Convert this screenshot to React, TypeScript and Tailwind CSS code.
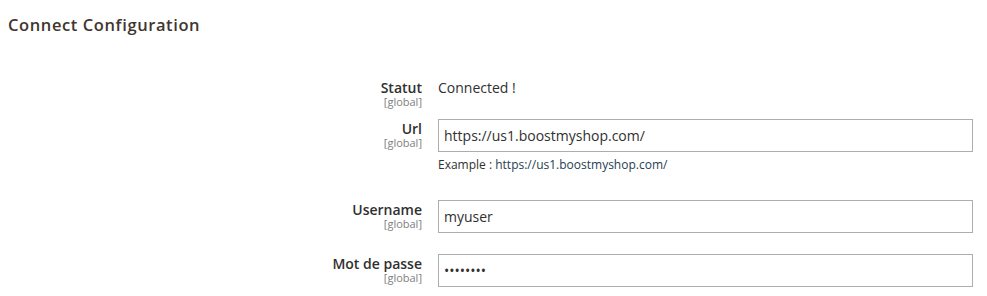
import React from "react";

interface FieldRowProps {
  label: string;
  scope?: string;
  children: React.ReactNode;
  className?: string;
  labelClassName?: string;
}

function FieldRow({ label, scope = "[global]", children, className = "", labelClassName = "" }: FieldRowProps) {
  return (
    <div className={"flex items-start " + className}>
      <div className={"w-[422px] text-right " + labelClassName}>
        <div className="text-[14px] leading-[15px] font-semibold text-[#303030]">{label}</div>
        <div className="text-[11px] leading-[13px] text-[#808080]">{scope}</div>
      </div>
      <div className="ml-4 w-[535px]">{children}</div>
    </div>
  );
}

function TextInput({ value, type = "text" }: { value: string; type?: string }) {
  return (
    <input
      type={type}
      defaultValue={value}
      readOnly
      className="block w-full h-[33px] border border-[#adadad] bg-white px-[5px] text-[14px] text-[#303030] outline-none font-['Open_Sans',sans-serif]"
    />
  );
}

export default function App() {
  return (
    <div className="w-[987px] h-[296px] bg-white font-['Open_Sans',sans-serif] text-[#303030] overflow-hidden">
      <div className="pl-2 pt-[15px]">
        <h2 className="text-[16.5px] leading-5 font-semibold tracking-[0.6px] text-[#41362f]">Connect Configuration</h2>
      </div>

      <div className="mt-[44px]">
        <FieldRow label="Statut" labelClassName="pt-[1px]">
          <div className="text-[14px] leading-4 pt-[1px]">Connected !</div>
        </FieldRow>

        <FieldRow label="Url" className="mt-[11px]" labelClassName="pt-[2px]">
          <TextInput value="https://us1.boostmyshop.com/" />
          <div className="mt-[5px] text-[12px] leading-4">
            Example : <span className="text-[#26414f]">https://us1.boostmyshop.com/</span>
          </div>
        </FieldRow>

        <FieldRow label="Username" className="mt-[27px]" labelClassName="pt-[2px]">
          <TextInput value="myuser" />
        </FieldRow>

        <FieldRow label="Mot de passe" className="mt-[21px]" labelClassName="pt-[2px]">
          <TextInput value="12345678" type="password" />
        </FieldRow>
      </div>
    </div>
  );
}
